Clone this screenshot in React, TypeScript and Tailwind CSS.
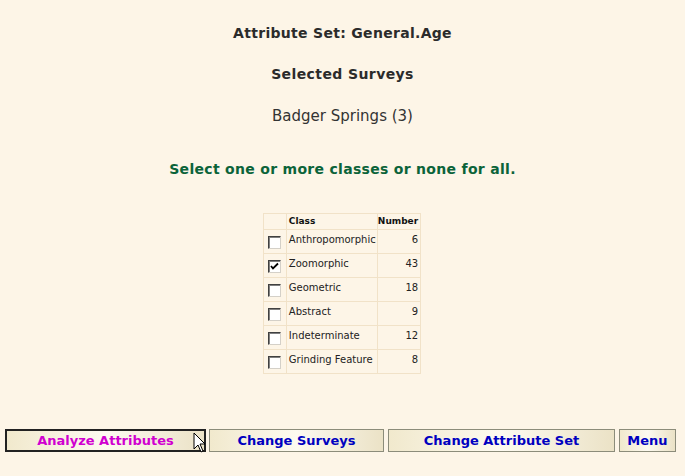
import React from 'react';

const rows = [
  { name: 'Anthropomorphic', count: 6, checked: false },
  { name: 'Zoomorphic', count: 43, checked: true },
  { name: 'Geometric', count: 18, checked: false },
  { name: 'Abstract', count: 9, checked: false },
  { name: 'Indeterminate', count: 12, checked: false },
  { name: 'Grinding Feature', count: 8, checked: false },
];

const Box = ({ checked }: { checked: boolean }) => (
  <div className="w-[13px] h-[13px] bg-white border border-t-[#404040] border-l-[#404040] border-b-[#d4d0c8] border-r-[#d4d0c8] shadow-[inset_1px_1px_0_#808080] flex items-center justify-center">
    {checked && (
      <svg width="9" height="9" viewBox="0 0 9 9">
        <path d="M1 4 L3 6.5 L8 1.5" stroke="#000" strokeWidth="1.8" fill="none" />
      </svg>
    )}
  </div>
);

const btn =
  'h-[23px] border border-[#8c8c7a] bg-gradient-to-r from-[#f1e9cd] via-[#fdfaf0] to-[#ebe2c6] text-[13px] font-bold text-[#0000c0] flex items-center justify-center';

export default function App() {
  return (
    <div className="w-[685px] h-[476px] bg-[#fdf5e7] font-['DejaVu_Sans',Verdana,sans-serif] text-[#333] flex flex-col items-center relative overflow-hidden">
      <div className="mt-[24px] text-[14px] tracking-[0.3px] font-bold leading-[18px] text-[#2b2b2b]">Attribute Set: General.Age</div>
      <div className="mt-[23px] text-[14px] tracking-[0.4px] font-bold leading-[18px] text-[#2b2b2b]">Selected Surveys</div>
      <div className="mt-[24px] text-[15px] leading-[18px] text-[#333]">Badger Springs (3)</div>
      <div className="mt-[34px] text-[14px] tracking-[0.3px] font-bold leading-[20px] text-[#0b6339]">
        Select one or more classes or none for all.
      </div>

      <table className="mt-[34px] ml-[-1px] border-collapse border border-[#f1e2c8] text-[10px] text-[#222]">
        <thead>
          <tr className="h-[16px]">
            <th className="w-[23px] border border-[#f1e2c8]"></th>
            <th className="w-[91px] border border-[#f1e2c8] text-left pl-[2px] text-[9px] font-bold text-[#111]">Class</th>
            <th className="w-[43px] border border-[#f1e2c8] text-right pr-[2px] text-[9px] font-bold text-[#111]">Number</th>
          </tr>
        </thead>
        <tbody>
          {rows.map((r) => (
            <tr key={r.name} className="h-[24px]">
              <td className="border border-[#f1e2c8] align-bottom pb-[4px]">
                <div className="flex justify-center"><Box checked={r.checked} /></div>
              </td>
              <td className="border border-[#f1e2c8] align-top pt-[2px] pl-[2px] whitespace-nowrap">{r.name}</td>
              <td className="border border-[#f1e2c8] align-top pt-[2px] pr-[2px] text-right">{r.count}</td>
            </tr>
          ))}
        </tbody>
      </table>

      <div className="absolute left-0 top-[429px] w-full flex pl-[5px]">
        <div className={`${btn} w-[201px] border-[#222] border-2 text-[#d000d0]`}>Analyze Attributes</div>
        <div className={`${btn} w-[175px] ml-[3px]`}>Change Surveys</div>
        <div className={`${btn} w-[227px] ml-[4px]`}>Change Attribute Set</div>
        <div className={`${btn} w-[57px] ml-[4px]`}>Menu</div>
      </div>

      <svg className="absolute left-[193px] top-[432px]" width="14" height="24" viewBox="0 0 14 24">
        <path d="M1 1 L1 17 L5 13 L8 20 L10 19 L7 12 L12 12 Z" fill="#fff" stroke="#000" strokeWidth="1" />
      </svg>
    </div>
  );
}
